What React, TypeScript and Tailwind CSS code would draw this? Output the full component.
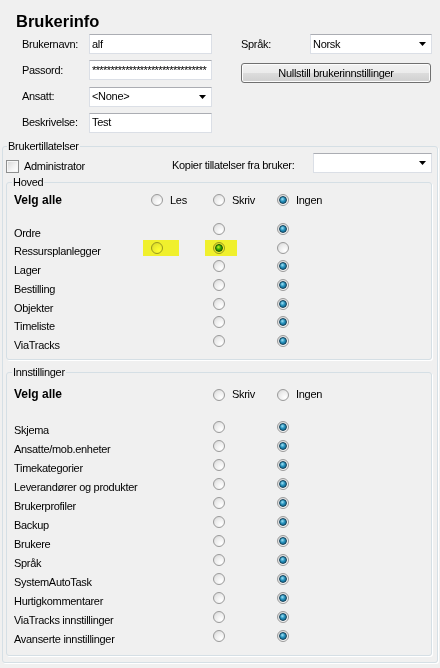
import React from 'react';

type RState = 'off' | 'blue' | 'green';

function Radio({ state = 'off' }: { state?: RState }) {
  return (
    <span className="flex h-[12px] w-[12px] shrink-0 items-center justify-center rounded-full border border-[#9a9a9a] bg-[radial-gradient(circle_at_70%_75%,#ffffff,#ececec_55%,#d0d0d0)]">
      {state === 'blue' && (
        <span className="block h-[8px] w-[8px] rounded-full border border-[#123f57] bg-[radial-gradient(circle_at_40%_35%,#9fe2f6,#2590bb_45%,#0c5a80)]" />
      )}
      {state === 'green' && (
        <span className="block h-[8px] w-[8px] rounded-full border border-[#174f10] bg-[radial-gradient(circle_at_40%_35%,#c6f7a8,#35a624_45%,#136a0e)]" />
      )}
    </span>
  );
}

function Arrow() {
  return (
    <svg width="7" height="4" viewBox="0 0 7 4" className="shrink-0">
      <path d="M0 0H7L3.5 4Z" fill="#000" />
    </svg>
  );
}

function TextBox({ children }: { children?: React.ReactNode }) {
  return (
    <div className="flex h-[20px] w-[123px] items-center overflow-hidden whitespace-nowrap border border-[#dbdfe6] border-t-[#abadb3] bg-white pl-[2px]">
      {children}
    </div>
  );
}

function Combo({ className, children }: { className: string; children?: React.ReactNode }) {
  return (
    <div className={className}>
      <div className="flex h-full w-full items-center justify-between border border-[#dbdfe6] border-t-[#abadb3] bg-white pl-[2px] pr-[5px]">
        <span>{children}</span>
        <Arrow />
      </div>
    </div>
  );
}

function Checkbox() {
  return (
    <span className="block h-[13px] w-[13px] shrink-0 border border-[#8e8f8f] bg-[linear-gradient(135deg,#d6d6d6,#f4f4f4_60%,#ffffff)] shadow-[inset_0_0_0_1px_#f6f6f6]" />
  );
}

function FormRow({ label, children }: { label: string; children: React.ReactNode }) {
  return (
    <div className="flex h-[20px] items-center">
      <span className="w-[67px]">{label}</span>
      {children}
    </div>
  );
}

function RadioLabel({ label, state, className }: { label: string; state?: RState; className: string }) {
  return (
    <div className={className}>
      <div className="flex items-center gap-[7px]">
        <Radio state={state} />
        <span>{label}</span>
      </div>
    </div>
  );
}

const hoved = ['Ordre', 'Ressursplanlegger', 'Lager', 'Bestilling', 'Objekter', 'Timeliste', 'ViaTracks'];
const innst = [
  'Skjema',
  'Ansatte/mob.enheter',
  'Timekategorier',
  'Leverandører og produkter',
  'Brukerprofiler',
  'Backup',
  'Brukere',
  'Språk',
  'SystemAutoTask',
  'Hurtigkommentarer',
  'ViaTracks innstillinger',
  'Avanserte innstillinger',
];

export default function App() {
  return (
    <div className="flex h-[668px] w-[440px] flex-col overflow-hidden bg-[#f0f0f0] font-['Liberation_Sans',Arial,sans-serif] text-[11px] leading-[13px] tracking-[-0.3px] text-black">
      <div className="h-[34px] shrink-0 pl-[16px] pt-[11px] text-[16.5px] font-bold leading-[20px] tracking-normal">
        Brukerinfo
      </div>
      <div className="flex h-[99px] shrink-0">
        <div className="flex flex-col gap-[6.33px] pl-[22px]">
          <FormRow label="Brukernavn:">
            <TextBox>alf</TextBox>
          </FormRow>
          <FormRow label="Passord:">
            <TextBox>
              <span className="tracking-[-0.6px]">*******************************</span>
            </TextBox>
          </FormRow>
          <FormRow label="Ansatt:">
            <Combo className="h-[20px] w-[123px]">&lt;None&gt;</Combo>
          </FormRow>
          <FormRow label="Beskrivelse:">
            <TextBox>Test</TextBox>
          </FormRow>
        </div>
        <div className="ml-[29px] flex flex-col">
          <div className="flex h-[20px] items-center">
            <span className="w-[69px]">Språk:</span>
            <Combo className="h-[20px] w-[122px]">Norsk</Combo>
          </div>
          <button className="mt-[9px] flex h-[20px] w-[190px] items-center justify-center rounded-[3px] border border-[#707070] bg-[linear-gradient(#f2f2f2,#ebebeb_50%,#dddddd_50%,#cfcfcf)] shadow-[inset_0_0_0_1px_#fcfcfc]">
            Nullstill brukerinnstillinger
          </button>
        </div>
      </div>

      <fieldset className="ml-[2px] mt-[6.5px] w-[436px] shrink-0 rounded-[3px] border border-[#d5dfe5] pb-[6px] shadow-[1px_1px_0_#ffffff]">
        <legend className="ml-[4px] px-[1px] leading-[13px]">Brukertillatelser</legend>
        <div className="flex h-[20px] items-start pl-[3px]">
          <div className="mt-[7px] flex w-[166px] items-center gap-[5px]">
            <Checkbox />
            <span>Administrator</span>
          </div>
          <span className="mt-[6px] w-[141px]">Kopier tillatelser fra bruker:</span>
          <Combo className="h-[20px] w-[119px]" />
        </div>

        <fieldset className="ml-[3px] mt-[3px] w-[426px] rounded-[3px] border border-[#d5dfe5] pb-[6px] shadow-[1px_1px_0_#ffffff]">
          <legend className="ml-[5px] px-[1px] leading-[13px]">Hoved</legend>
          <div className="pl-[7px] pt-[1.5px]">
            <div className="flex h-[20px] items-center">
              <span className="w-[137px] text-[12px] font-bold tracking-normal">Velg alle</span>
              <RadioLabel className="w-[62px]" label="Les" />
              <RadioLabel className="w-[64px]" label="Skriv" />
              <RadioLabel className="" label="Ingen" state="blue" />
            </div>
            <div className="mt-[12.5px]">
              {hoved.map((name) => {
                const special = name === 'Ressursplanlegger';
                return (
                  <div key={name} className="flex h-[18.7px] items-start">
                    <span className="w-[137px] pt-[4.3px]">{name}</span>
                    <div className="relative h-full w-[62px] pt-[0.5px]">
                      {special && <Radio />}
                      {special && (
                        <div className="pointer-events-none absolute left-[-8px] top-[-1.2px] h-[15.5px] w-[36px] bg-[#ffff30] mix-blend-multiply" />
                      )}
                    </div>
                    <div className="relative h-full w-[64px] pt-[0.5px]">
                      <Radio state={special ? 'green' : 'off'} />
                      {special && (
                        <div className="pointer-events-none absolute left-[-8px] top-[-1.2px] h-[15.5px] w-[32px] bg-[#ffff30] mix-blend-multiply" />
                      )}
                    </div>
                    <div className="pt-[0.5px]">
                      <Radio state={special ? 'off' : 'blue'} />
                    </div>
                  </div>
                );
              })}
            </div>
          </div>
        </fieldset>

        <fieldset className="ml-[3px] mt-[6px] w-[426px] rounded-[3px] border border-[#d5dfe5] pb-[7px] shadow-[1px_1px_0_#ffffff]">
          <legend className="ml-[5px] px-[1px] leading-[13px]">Innstillinger</legend>
          <div className="pl-[7px] pt-[5.5px]">
            <div className="flex h-[20px] items-center">
              <span className="w-[199px] text-[12px] font-bold tracking-normal">Velg alle</span>
              <RadioLabel className="w-[64px]" label="Skriv" />
              <RadioLabel className="" label="Ingen" />
            </div>
            <div className="mt-[15.2px]">
              {innst.map((name) => (
                <div key={name} className="flex h-[19px] items-start">
                  <span className="w-[199px] pt-[4.3px]">{name}</span>
                  <div className="w-[64px] pt-[0.5px]">
                    <Radio />
                  </div>
                  <div className="pt-[0.5px]">
                    <Radio state="blue" />
                  </div>
                </div>
              ))}
            </div>
          </div>
        </fieldset>
      </fieldset>
    </div>
  );
}
